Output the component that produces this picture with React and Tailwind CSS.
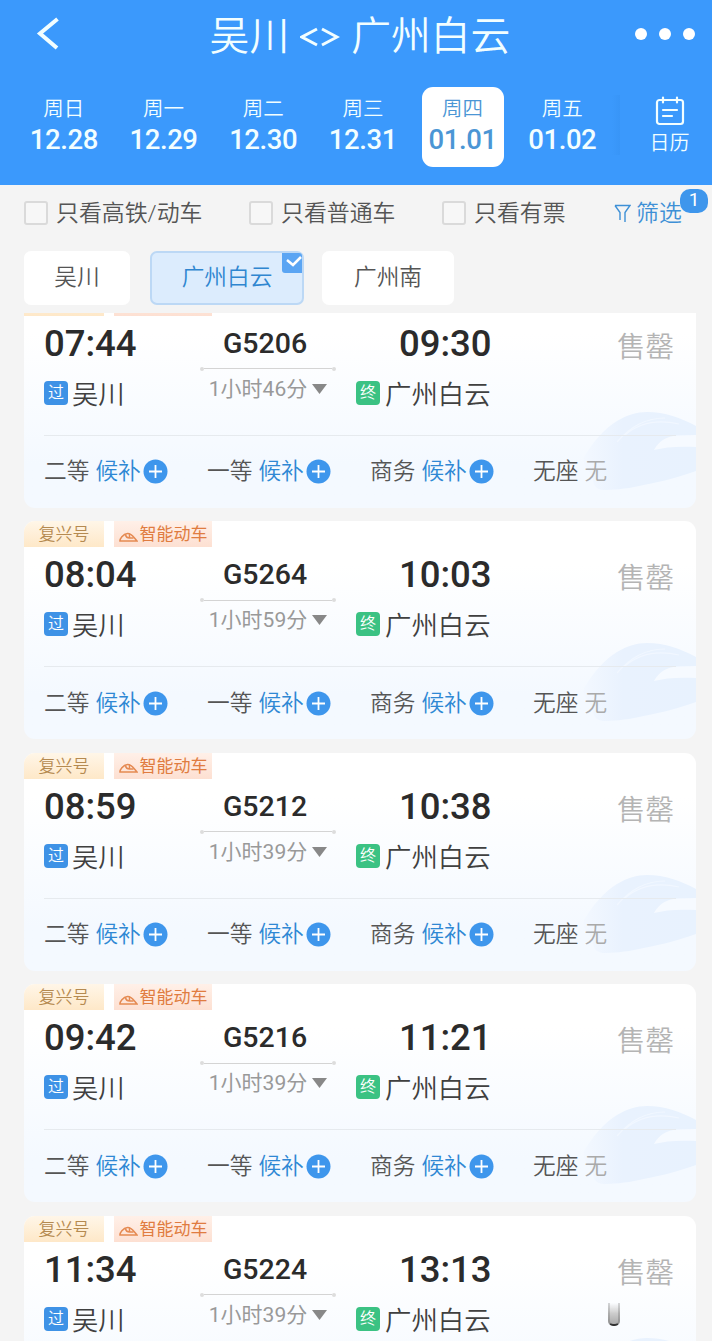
import React, { useState } from 'react'
import clsx from 'clsx'

const days = [
  { week: '周日', date: '12.28' },
  { week: '周一', date: '12.29' },
  { week: '周二', date: '12.30' },
  { week: '周三', date: '12.31' },
  { week: '周四', date: '01.01' },
  { week: '周五', date: '01.02' },
]

const filters = [
  { label: '只看高铁/动车', className: 'w-[225px]' },
  { label: '只看普通车', className: 'w-[193px]' },
  { label: '只看有票', className: 'w-[172px]' },
]

const stations = [
  { name: '吴川', className: 'w-[106px]' },
  { name: '广州白云', className: 'ml-5 w-[154px]' },
  { name: '广州南', className: 'ml-[18px] w-[132px]' },
]

const trains = [
  { no: 'G5206', depart: '07:44', arrive: '09:30', duration: '1小时46分' },
  { no: 'G5264', depart: '08:04', arrive: '10:03', duration: '1小时59分' },
  { no: 'G5212', depart: '08:59', arrive: '10:38', duration: '1小时39分' },
  { no: 'G5216', depart: '09:42', arrive: '11:21', duration: '1小时39分' },
  { no: 'G5224', depart: '11:34', arrive: '13:13', duration: '1小时39分' },
]

const seats = [
  { name: '二等', waitlist: true },
  { name: '一等', waitlist: true },
  { name: '商务', waitlist: true },
  { name: '无座', waitlist: false },
]

function TrainIcon() {
  return (
    <svg className="mt-[6px]" width="19" height="11" viewBox="0 0 19 11" fill="none" stroke="#e58a52" strokeWidth="1.500">
      <path d="M1 9.500C.5 7 4 2 8.500 1.500c4-.3 5.500 3 9.500 7.500H1z" />
      <path d="M6.500 3c.5 2 2 3 4 3h4M10.500 6V2" />
    </svg>
  )
}

function TrainWatermark() {
  return (
    <svg
      className="absolute right-0 bottom-[17px]"
      width="115"
      height="80"
      viewBox="0 0 115 80"
      fill="none"
    >
      <defs>
        <linearGradient id="nose" x1="0" x2="1" y1="0" y2="0">
          <stop offset="0" stopColor="#f3f8ff" />
          <stop offset=".35" stopColor="#e9f2fe" />
          <stop offset="1" stopColor="#e8f2fe" />
        </linearGradient>
      </defs>
      <path
        d="M3 46C12 31 24 17 36 10 46 4 56 1 66 1c18 0 34 6 49 14v45c-22 8-42 12-57 15-13 3-28 4-36 4-7-1-10-5-10-11-1-7-12-13-9-22z"
        fill="url(#nose)"
      />
      <path d="M73 39c5-9 13-14 23-14.500L115 24v12c-17-1-31 0-42 3z" fill="#f6faff" />
      <path d="M36 31C48 17 64 7 84 7M44 24C58 12 76 8 98 13" stroke="#f1f7ff" strokeWidth="1.200" />
    </svg>
  )
}

function PlusBadge() {
  return (
    <svg className="mt-[1px] ml-[2px]" width="25" height="25" viewBox="0 0 25 25">
      <circle cx="12.500" cy="12.500" r="12" fill="#3e96ec" />
      <path d="M12.500 6v13M6 12.500h13" stroke="#fff" strokeWidth="1.800" />
    </svg>
  )
}

function Header({ selected, onSelect }) {
  return (
    <header className="h-[185px] bg-[#3b99fc] text-[#f2feff]">
      <div className="relative flex h-[72px] items-center justify-center">
        <button className="absolute top-[17px] left-9">
          <svg width="24" height="34" viewBox="0 0 24 34" fill="none" stroke="currentColor" strokeWidth="4">
            <path d="M21.500 2L4 16.500 21 31" />
          </svg>
        </button>
        <h1 className="flex h-[72px] items-center pt-[2px] pl-2 text-[39.800px] leading-[72px] font-[350]">
          <span>吴川</span>
          <svg className="mx-[11px]" width="40" height="20" viewBox="0 0 40 20" fill="none" stroke="currentColor" strokeWidth="3">
            <path d="M17 2L2 10l15 8M22 2l15 8-15 8" />
          </svg>
          <span>广州白云</span>
        </h1>
        <div className="absolute top-[28px] right-[17px] flex gap-3">
          <span className="size-3 rounded-full bg-white" />
          <span className="size-3 rounded-full bg-white" />
          <span className="size-3 rounded-full bg-white" />
        </div>
      </div>
      <div className="flex pt-[15px] pl-[14px]">
        {days.map((d) => (
          <div key={d.date} className="flex w-[99.700px] justify-center">
            <button
              onClick={() => onSelect(d.date)}
              className={clsx(
                'flex h-20 w-[82px] flex-col items-center rounded-[11px] pt-[7px]',
                selected === d.date && 'bg-white text-[#4b96d5]'
              )}
            >
              <span className="h-[30px] text-[20.500px] leading-[30px] font-[350]">{d.week}</span>
              <span className="h-8 text-[27.500px] leading-8 font-medium tracking-[-0.4px]">{d.date}</span>
            </button>
          </div>
        ))}
        <div className="mt-2 h-[60px] w-2 bg-linear-to-r from-[#3b99fc] to-[#3895f7]" />
        <div className="flex flex-1 flex-col items-center pt-[9px] pl-[7px]">
          <svg width="30" height="30" viewBox="0 0 30 30" fill="none" stroke="currentColor" strokeWidth="2.200" strokeLinecap="round">
            <rect x="2" y="4" width="26" height="24" rx="2.500" />
            <path d="M8 1.500v5M22 1.500v5M8 14h14M8 20h9" />
          </svg>
          <span className="mt-[2px] text-xl leading-[30px] font-[350]">日历</span>
        </div>
      </div>
    </header>
  )
}

function FilterBar() {
  return (
    <div className="flex h-14 items-center pl-6 text-[22.900px] leading-8 font-[350] text-[#555]">
      {filters.map((f) => (
        <label key={f.label} className={clsx('flex shrink-0 items-center whitespace-nowrap', f.className)}>
          <span className="mr-2 size-6 shrink-0 rounded-[3px] border-2 border-[#dadada] bg-[#f7f7f7]" />
          <span className="pt-[2px]">{f.label}</span>
        </label>
      ))}
      <button className="relative flex items-center whitespace-nowrap text-[#3e90d6]">
        <svg className="mr-[5px]" width="17" height="19" viewBox="0 0 17 19" fill="none" stroke="currentColor" strokeWidth="1.400">
          <path d="M1 1.500h15l-5 7V18M6 16V8.500L1 1.500" />
        </svg>
        <span className="pt-[2px]">筛选</span>
        <span className="absolute -top-[7px] left-[66px] h-6 w-7 rounded-[10px] bg-[#3e96ec] text-center text-[19px] leading-[22px] font-normal text-white">
          1
        </span>
      </button>
    </div>
  )
}

function StationTabs({ selected, onSelect }) {
  return (
    <div className="flex h-[72px] pt-[10px] pl-6 text-[22.700px] font-[350] text-[#555]">
      {stations.map((s) => (
        <button
          key={s.name}
          onClick={() => onSelect(s.name)}
          className={clsx(
            'relative h-[54px] rounded-[7px]',
            s.className,
            selected === s.name
              ? 'border-2 border-[#bcd8f5] bg-[#dcecfd] leading-[50px] text-[#2f86d0]'
              : 'bg-white leading-[54px]'
          )}
        >
          {s.name}
          {selected === s.name && (
            <svg className="absolute top-0 right-0" width="20" height="20" viewBox="0 0 20 20" fill="none">
              <path d="M0 0h17a3 3 0 013 3v17H3a3 3 0 01-3-3z" fill="#5ba5f3" />
              <path d="M5 7l6 5 8-8" stroke="#fff" strokeWidth="2.500" />
            </svg>
          )}
        </button>
      ))}
    </div>
  )
}

function TrainCard({ train }) {
  return (
    <div className="relative h-[218px] shrink-0 overflow-hidden rounded-[11px] bg-linear-to-b from-white from-20% to-[#f4f9ff] to-80%">
      <TrainWatermark />
      <div className="relative flex h-[26px] gap-[10px] text-[17px] leading-[26px]">
        <span className="w-20 bg-linear-to-b from-[#fff6e8] to-[#fee8c8] text-center font-[350] text-[#b58a50]">
          复兴号
        </span>
        <span className="flex w-[98px] items-center justify-center gap-[2px] bg-linear-to-b from-[#fff0e8] to-[#fde0d2] whitespace-nowrap text-[#e07c40]">
          <TrainIcon />
          智能动车
        </span>
      </div>

      <div className="relative flex h-[119px] pl-5 text-[#2b2b2b]">
        <div className="w-[156px]">
          <p className="h-12 pt-2 text-[36.500px] leading-10 font-medium">{train.depart}</p>
          <p className="flex items-start pt-[10px] text-[26.300px] leading-[40px] font-[350] text-[#404040]">
            <span className="mt-[7px] mr-1 size-6 rounded-[4px] bg-[#3e92e6] text-center text-base leading-6 text-white">过</span>
            <span className="pt-[1px]">吴川</span>
          </p>
        </div>
        <div className="flex w-[136px] flex-col items-center">
          <p className="h-[51px] pt-2 pr-[6px] text-[28.500px] leading-10 font-medium">{train.no}</p>
          <div className="flex w-full items-center">
            <span className="size-1 rounded-full bg-[#ddd]" />
            <span className="h-px flex-1 bg-[#d4d4d4]" />
            <span className="size-1 rounded-full bg-[#ddd]" />
          </div>
          <p className="flex items-center gap-[5px] pt-[2px] text-[21px] leading-8 font-normal whitespace-nowrap text-[#999]">
            {train.duration}
            <svg width="15" height="10" viewBox="0 0 15 10">
              <path d="M0 0h15L7.500 10z" fill="#888" />
            </svg>
          </p>
        </div>
        <div className="ml-5">
          <p className="h-12 pt-2 pl-[43px] text-[36.500px] leading-10 font-medium">{train.arrive}</p>
          <p className="flex items-start pt-[10px] text-[26.400px] leading-[40px] font-[350] text-[#404040]">
            <span className="mt-[7px] mr-[5px] size-6 rounded-[4px] bg-[#3bc283] text-center text-base leading-6 text-white">终</span>
            <span className="pt-[1px]">广州白云</span>
          </p>
        </div>
        <p className="ml-auto pt-3 pr-[22px] text-[28.500px] leading-10 font-[350] text-[#b4b4b4]">售罄</p>
      </div>

      <div className="relative mx-5 flex h-[72px] items-center border-t border-[#e6eaee] text-[22.700px] leading-8 font-[350] text-[#555]">
        {seats.map((seat) => (
          <div key={seat.name} className="flex w-[163px] shrink-0 items-center whitespace-nowrap">
            <span className="mr-[6px] pt-[2px]">{seat.name}</span>
            {seat.waitlist ? (
              <>
                <span className="pt-[2px] text-[#2f88d4]">候补</span>
                <PlusBadge />
              </>
            ) : (
              <span className="pt-[2px] text-[#aaa]">无</span>
            )}
          </div>
        ))}
      </div>
    </div>
  )
}

export default function App() {
  const [day, setDay] = useState('01.01')
  const [station, setStation] = useState('广州白云')

  return (
    <div className="relative flex h-[1341px] w-[712px] flex-col overflow-hidden bg-[#f4f4f4] font-[Roboto,'Noto_Sans_CJK_SC',sans-serif]">
      <Header selected={day} onSelect={setDay} />
      <FilterBar />
      <StationTabs selected={station} onSelect={setStation} />
      <main className="min-h-0 flex-1 overflow-hidden px-4 pl-6">
        <div className="-mt-[23.500px] flex flex-col gap-[13.500px]">
          {trains.map((t) => (
            <TrainCard key={t.no} train={t} />
          ))}
        </div>
      </main>
      {/* small dark smear over the last card */}
      <span className="absolute top-[1303px] left-[608px] h-[23px] w-3 rounded-b-[5px] border-x-2 border-b-2 border-black/15 border-b-[#333] bg-linear-to-b from-transparent via-[#ccc] to-[#aaa]" />
    </div>
  )
}
